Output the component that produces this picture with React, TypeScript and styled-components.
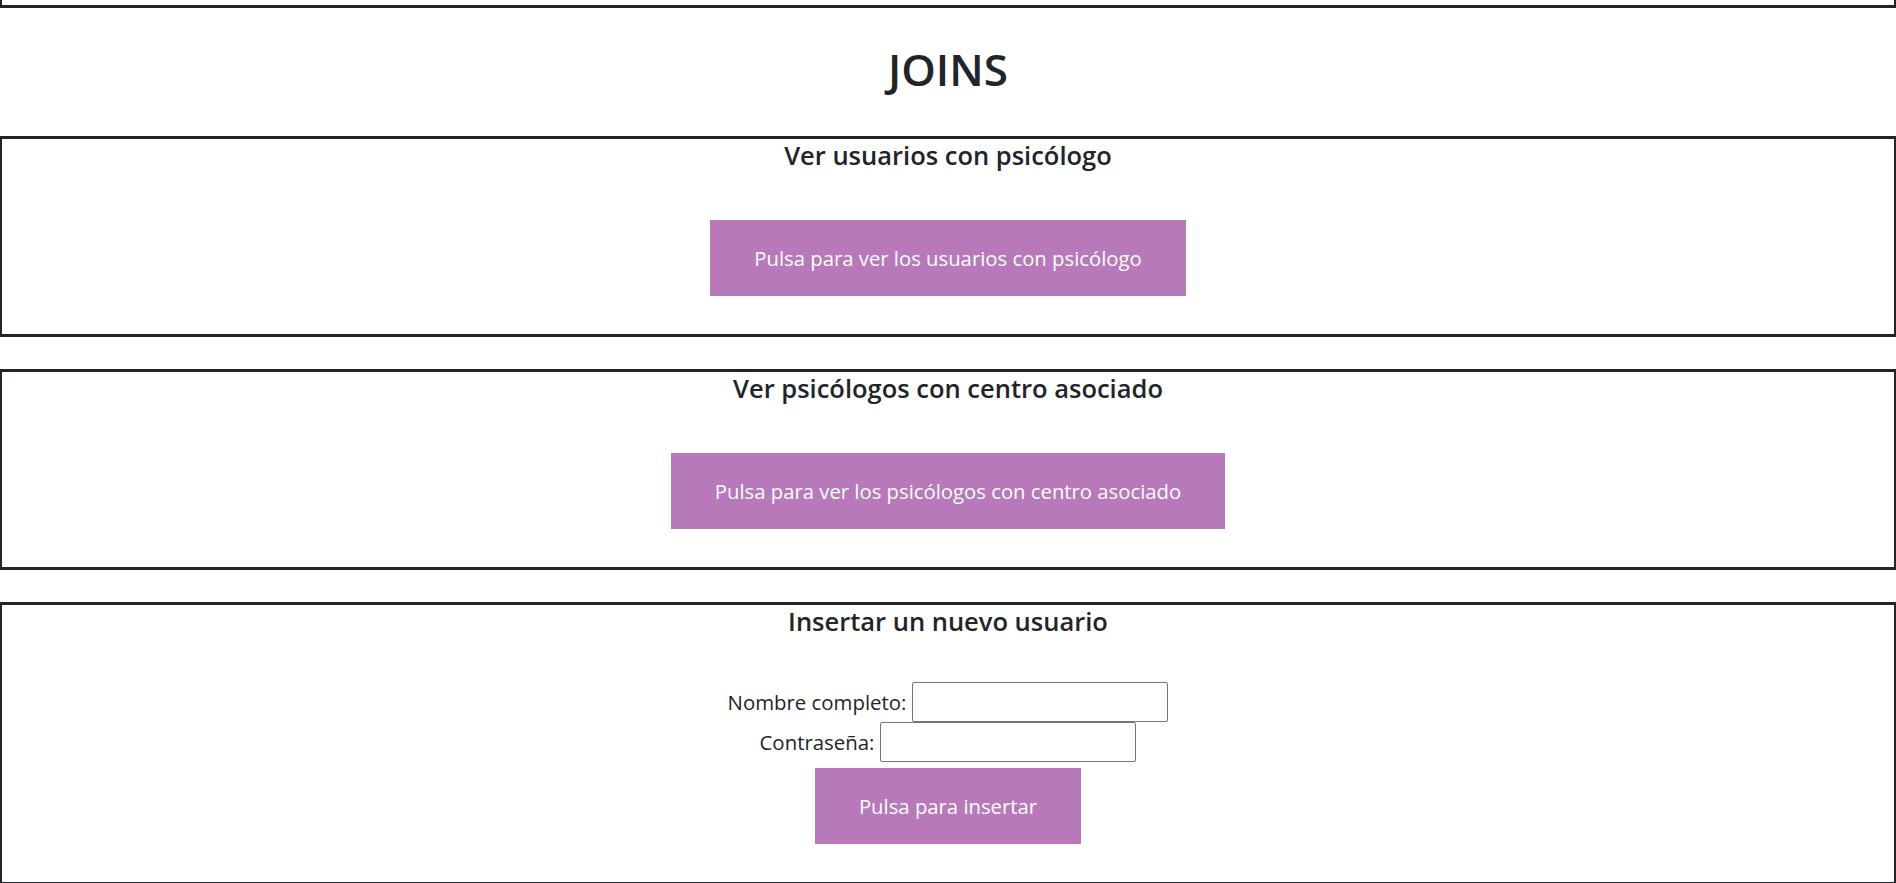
import React from "react";
import styled, { createGlobalStyle } from "styled-components";

const GlobalStyle = createGlobalStyle`
  html, body {
    margin: 0;
    padding: 0;
    background: #ffffff;
  }
  body {
    font-family: "Open Sans", "Noto Sans", "Liberation Sans", sans-serif;
    color: #212529;
  }
  * { box-sizing: border-box; }
`;

const Page = styled.main`
  display: flex;
  flex-direction: column;
  width: 100%;
`;

const PrevSection = styled.div`
  height: 8px;
  border-style: solid;
  border-color: #212529;
  border-width: 0 2px 3px;
`;

const Title = styled.h1`
  margin: 35px 0 41px;
  font-size: 44px;
  line-height: 52px;
  font-weight: 600;
  text-align: center;
`;

const Section = styled.section`
  display: flex;
  flex-direction: column;
  align-items: center;
  border-style: solid;
  border-color: #212529;
  border-width: 3px 2px;
  padding: 1px 0 38px;
  margin-bottom: 32px;
`;

const SectionTitle = styled.h3`
  margin: 0;
  font-size: 25.5px;
  line-height: 30px;
  font-weight: 600;
  text-align: center;
`;

const PurpleButton = styled.button<{ $gap?: number }>`
  display: inline-flex;
  align-items: center;
  justify-content: center;
  height: 76px;
  margin-top: ${(p) => (p.$gap ?? 50)}px;
  padding: 0 44px;
  border: none;
  border-radius: 0;
  background: #b879bb;
  color: #ffffff;
  font-family: "Open Sans", "Noto Sans", "Liberation Sans", sans-serif;
  font-size: 20.3px;
  cursor: pointer;
`;

const Form = styled.form`
  display: flex;
  flex-direction: column;
  align-items: center;
  margin-top: 46px;
`;

const FieldRow = styled.div`
  display: flex;
  align-items: center;
  gap: 6px;
  height: 40px;
`;

const Label = styled.label`
  font-size: 20.4px;
  line-height: 28px;
  color: #212529;
`;

const TextInput = styled.input`
  width: 256px;
  height: 40px;
  padding: 1px 4px;
  border: 1px solid #767676;
  border-radius: 2px;
  background: #ffffff;
  font-family: "Open Sans", "Noto Sans", sans-serif;
  font-size: 16px;
`;

export default function App() {
  return (
    <>
      <GlobalStyle />
      <Page>
        <PrevSection />
        <Title>JOINS</Title>

        <Section>
          <SectionTitle>Ver usuarios con psicólogo</SectionTitle>
          <PurpleButton type="button">Pulsa para ver los usuarios con psicólogo</PurpleButton>
        </Section>

        <Section>
          <SectionTitle>Ver psicólogos con centro asociado</SectionTitle>
          <PurpleButton type="button">Pulsa para ver los psicólogos con centro asociado</PurpleButton>
        </Section>

        <Section>
          <SectionTitle>Insertar un nuevo usuario</SectionTitle>
          <Form onSubmit={(e) => e.preventDefault()}>
            <FieldRow>
              <Label htmlFor="nombre">Nombre completo:</Label>
              <TextInput id="nombre" type="text" />
            </FieldRow>
            <FieldRow>
              <Label htmlFor="pass">Contraseña:</Label>
              <TextInput id="pass" type="password" />
            </FieldRow>
            <PurpleButton type="submit" $gap={6}>Pulsa para insertar</PurpleButton>
          </Form>
        </Section>
      </Page>
    </>
  );
}
